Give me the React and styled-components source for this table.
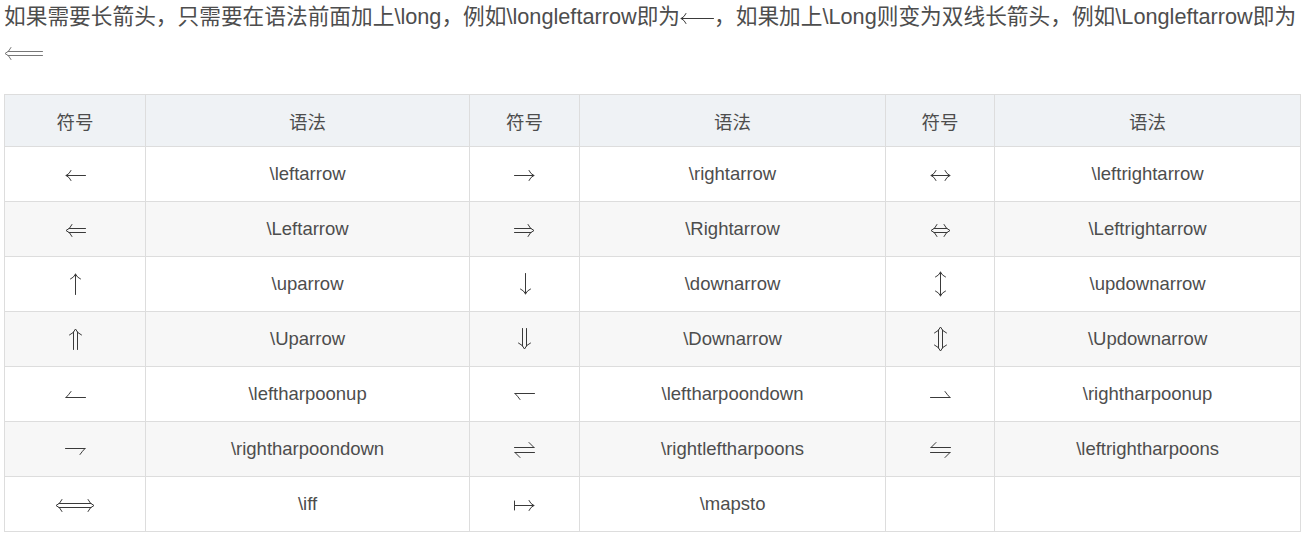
import React from "react";
import styled, { createGlobalStyle } from "styled-components";

const GlobalStyle = createGlobalStyle`
  body {
    margin: 0;
    background: #ffffff;
    font-family: "Liberation Sans", "Noto Sans CJK SC", sans-serif;
  }
`;

const Page = styled.div`
  width: 1297px;
  padding: 0 0 0 4px;
`;

const Intro = styled.p`
  margin: 0;
  font-size: 21.7px;
  line-height: 34px;
  color: #4d4d4d;
  word-break: break-all;
`;

const Glyph = styled.svg`
  display: inline-block;
  vertical-align: ${(p) => p.$align || "middle"};
  overflow: visible;

  path {
    fill: none;
    stroke: ${(p) => p.$color || "#3a3a3a"};
    stroke-width: 1;
    stroke-linecap: round;
    stroke-linejoin: round;
  }
`;

const Table = styled.table`
  margin-top: 26px;
  width: 100%;
  border-collapse: collapse;
  font-size: 18.5px;
  color: #4d4d4d;
`;

const HeadCell = styled.th`
  height: 51px;
  padding: 0;
  font-weight: normal;
  color: #4d4d4d;
  background: #eff2f5;
  border: 1px solid #dddddd;
  width: ${(p) => p.$w}px;
`;

const Row = styled.tr`
  background: ${(p) => (p.$striped ? "#f7f7f7" : "#ffffff")};
`;

const Cell = styled.td`
  height: 54px;
  padding: 0;
  text-align: center;
  border: 1px solid #dddddd;
  line-height: 1;
`;

// thin arrow heads and harpoons, drawn like KaTeX's glyphs
const shapes = {
  leftarrow: { w: 21, h: 12, d: "M1 6.5H20.5M6 1.5Q4.5 5 1 6.5Q4.5 8 6 11.5" },
  rightarrow: { w: 21, h: 12, d: "M0.5 6.5H20M15 1.5Q16.5 5 20 6.5Q16.5 8 15 11.5" },
  leftrightarrow: { w: 21, h: 12, d: "M1 6.5H20M6 1.5Q4.5 5 1 6.5Q4.5 8 6 11.5M15 1.5Q16.5 5 20 6.5Q16.5 8 15 11.5" },
  Leftarrow: { w: 21, h: 12, d: "M4 4.5H20.5M4 8.5H20.5M7 0.5Q5 5 1 6.5Q5 8 7 12.5" },
  Rightarrow: { w: 21, h: 12, d: "M0.5 4.5H17M0.5 8.5H17M14 0.5Q16 5 20 6.5Q16 8 14 12.5" },
  Leftrightarrow: { w: 21, h: 12, d: "M4 4.5H17M4 8.5H17M7 0.5Q5 5 1 6.5Q5 8 7 12.5M14 0.5Q16 5 20 6.5Q16 8 14 12.5" },
  uparrow: { w: 12, h: 22, d: "M6.5 1V21.5M1.5 6Q5 4.5 6.5 1Q8 4.5 11.5 6" },
  downarrow: { w: 12, h: 22, d: "M6.5 0.5V21M1.5 16Q5 17.5 6.5 21Q8 17.5 11.5 16" },
  updownarrow: { w: 12, h: 26, d: "M6.5 1V25M1.5 6Q5 4.5 6.5 1Q8 4.5 11.5 6M1.5 20Q5 21.5 6.5 25Q8 21.5 11.5 20" },
  Uparrow: { w: 13, h: 22, d: "M4.5 4V21.5M8.5 4V21.5M0.5 7Q5 5 6.5 1Q8 5 12.5 7" },
  Downarrow: { w: 13, h: 22, d: "M4.5 0.5V18M8.5 0.5V18M0.5 15Q5 17 6.5 21Q8 17 12.5 15" },
  Updownarrow: { w: 13, h: 26, d: "M4.5 4V22M8.5 4V22M0.5 7Q5 5 6.5 1Q8 5 12.5 7M0.5 19Q5 21 6.5 25Q8 21 12.5 19" },
  leftharpoonup: { w: 21, h: 12, d: "M1 8.5H20.5M6 2.5Q3.5 6 1 8.5" },
  leftharpoondown: { w: 21, h: 12, d: "M1 4.5H20.5M1 4.5Q3.5 7 6 10.5" },
  rightharpoonup: { w: 21, h: 12, d: "M0.5 8.5H20M15 2.5Q17.5 6 20 8.5" },
  rightharpoondown: { w: 21, h: 12, d: "M0.5 4.5H20M20 4.5Q17.5 7 15 10.5" },
  rightleftharpoons: { w: 21, h: 16, d: "M0.5 5.5H20M15 0.5Q17.5 3 20 5.5M1 10.5H20.5M1 10.5Q3.5 13 6 15.5" },
  leftrightharpoons: { w: 21, h: 16, d: "M1 5.5H20.5M6 0.5Q3.5 3 1 5.5M0.5 10.5H20M20 10.5Q17.5 13 15 15.5" },
  iff: { w: 40, h: 12, d: "M4 4.5H36M4 8.5H36M7 0.5Q5 5 1 6.5Q5 8 7 12.5M33 0.5Q35 5 39 6.5Q35 8 33 12.5" },
  mapsto: { w: 21, h: 12, d: "M0.5 2V11M0.5 6.5H20M15 1.5Q16.5 5 20 6.5Q16.5 8 15 11.5" },
  longleftarrow: { w: 34, h: 12, d: "M1 6.5H33.5M6 1.5Q4.5 5 1 6.5Q4.5 8 6 11.5" },
  Longleftarrow: { w: 39, h: 12, d: "M4 4.5H38.5M4 8.5H38.5M7 0.5Q5 5 1 6.5Q5 8 7 12.5" },
};

const Arrow = ({ name, align, color }) => {
  const s = shapes[name];
  return (
    <Glyph
      width={s.w}
      height={s.h}
      viewBox={`0 0 ${s.w} ${s.h}`}
      $align={align}
      $color={color}
    >
      <path d={s.d} />
    </Glyph>
  );
};

const rows = [
  ["leftarrow", "rightarrow", "leftrightarrow"],
  ["Leftarrow", "Rightarrow", "Leftrightarrow"],
  ["uparrow", "downarrow", "updownarrow"],
  ["Uparrow", "Downarrow", "Updownarrow"],
  ["leftharpoonup", "leftharpoondown", "rightharpoonup"],
  ["rightharpoondown", "rightleftharpoons", "leftrightharpoons"],
  ["iff", "mapsto", null],
];

const widths = [141, 324, 110, 306, 109, 306];

export default function App() {
  return (
    <Page>
      <GlobalStyle />
      <Intro>
        如果需要长箭头，只需要在语法前面加上\long，例如\longleftarrow即为
        <Arrow name="longleftarrow" align="0px" />
        ，如果加上\Long则变为双线长箭头，例如\Longleftarrow即为
        <Arrow name="Longleftarrow" align="-1px" color="#777" />
      </Intro>

      <Table>
        <thead>
          <tr>
            {widths.map((w, i) => (
              <HeadCell key={i} $w={w}>
                {i % 2 === 0 ? "符号" : "语法"}
              </HeadCell>
            ))}
          </tr>
        </thead>
        <tbody>
          {rows.map((row, r) => (
            <Row key={r} $striped={r % 2 === 1}>
              {row.map((name, c) => (
                <React.Fragment key={c}>
                  <Cell>{name && <Arrow name={name} />}</Cell>
                  <Cell>{name && "\\" + name}</Cell>
                </React.Fragment>
              ))}
            </Row>
          ))}
        </tbody>
      </Table>
    </Page>
  );
}
